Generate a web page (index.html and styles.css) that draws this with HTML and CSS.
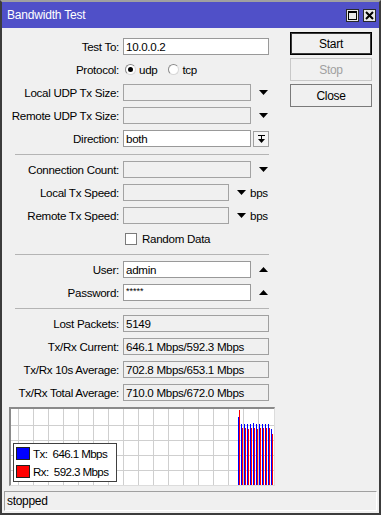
FILE: index.html
```html
<!DOCTYPE html>
<html>
<head>
<meta charset="utf-8">
<title>Bandwidth Test</title>
<link rel="stylesheet" href="styles.css">
</head>
<body>
<div class="window">
  <div class="titlebar">
    <span class="title">Bandwidth Test</span>
    <span class="tb-btn"><svg width="11" height="11" viewBox="0 0 11 11"><rect x="1.5" y="1.5" width="8" height="8" fill="none" stroke="#000" stroke-width="1"/><rect x="1" y="1" width="9" height="2" fill="#000"/></svg></span>
    <span class="tb-btn"><svg width="11" height="11" viewBox="0 0 11 11"><path d="M2 2L9 9M9 2L2 9" stroke="#000" stroke-width="2"/></svg></span>
  </div>
  <div class="main">
    <div class="form">
      <div class="row"><span class="label">Test To:</span><span class="field w-full white">10.0.0.2</span></div>
      <div class="row"><span class="label">Protocol:</span>
        <span class="radio on"></span><span class="opt">udp</span>
        <span class="radio"></span><span class="opt">tcp</span>
      </div>
      <div class="row"><span class="label">Local UDP Tx Size:</span><span class="field w-arrow"></span><span class="arrow"><svg width="9" height="5" viewBox="0 0 9 5"><path d="M0 0H9L4.5 5Z"/></svg></span></div>
      <div class="row"><span class="label">Remote UDP Tx Size:</span><span class="field w-arrow"></span><span class="arrow"><svg width="9" height="5" viewBox="0 0 9 5"><path d="M0 0H9L4.5 5Z"/></svg></span></div>
      <div class="row"><span class="label">Direction:</span><span class="field w-arrow white">both</span><span class="dir-btn"><svg width="9" height="10" viewBox="0 0 9 10"><path d="M1 1.5H8" stroke="#000" stroke-width="1"/><path d="M4.5 2V6" stroke="#000" stroke-width="1"/><path d="M1 5H8L4.5 9Z"/></svg></span></div>
      <div class="sep"></div>
      <div class="row"><span class="label">Connection Count:</span><span class="field w-arrow"></span><span class="arrow"><svg width="9" height="5" viewBox="0 0 9 5"><path d="M0 0H9L4.5 5Z"/></svg></span></div>
      <div class="row"><span class="label">Local Tx Speed:</span><span class="field w-unit"></span><span class="arrow"><svg width="9" height="5" viewBox="0 0 9 5"><path d="M0 0H9L4.5 5Z"/></svg></span><span class="unit">bps</span></div>
      <div class="row"><span class="label">Remote Tx Speed:</span><span class="field w-unit"></span><span class="arrow"><svg width="9" height="5" viewBox="0 0 9 5"><path d="M0 0H9L4.5 5Z"/></svg></span><span class="unit">bps</span></div>
      <div class="row"><span class="label"></span><span class="check"></span><span class="opt">Random Data</span></div>
      <div class="sep"></div>
      <div class="row"><span class="label">User:</span><span class="field w-arrow white">admin</span><span class="arrow"><svg width="9" height="5" viewBox="0 0 9 5"><path d="M0 5H9L4.5 0Z"/></svg></span></div>
      <div class="row"><span class="label">Password:</span><span class="field w-arrow white pw">*****</span><span class="arrow"><svg width="9" height="5" viewBox="0 0 9 5"><path d="M0 5H9L4.5 0Z"/></svg></span></div>
      <div class="sep"></div>
      <div class="row"><span class="label">Lost Packets:</span><span class="field w-full ro">5149</span></div>
      <div class="row"><span class="label">Tx/Rx Current:</span><span class="field w-full ro">646.1 Mbps/592.3 Mbps</span></div>
      <div class="row"><span class="label">Tx/Rx 10s Average:</span><span class="field w-full ro">702.8 Mbps/653.1 Mbps</span></div>
      <div class="row"><span class="label">Tx/Rx Total Average:</span><span class="field w-full ro">710.0 Mbps/672.0 Mbps</span></div>
    </div>
    <div class="actions">
      <button class="btn default">Start</button>
      <button class="btn" disabled>Stop</button>
      <button class="btn dark">Close</button>
    </div>
  </div>
  <div class="graph">
    <svg class="chart" width="263" height="76" viewBox="0 0 263 76">
      <rect width="263" height="76" fill="#fff"/>
      <g stroke="#cfcfcf" stroke-width="1">
        <path d="M7.5 0V76M22.5 0V76M37.5 0V76M52.5 0V76M67.5 0V76M82.5 0V76M97.5 0V76M112.5 0V76M127.5 0V76M142.5 0V76M157.5 0V76M172.5 0V76M187.5 0V76M202.5 0V76M217.5 0V76M232.5 0V76M247.5 0V76"/>
        <path d="M0 16.5H263M0 31.5H263M0 46.5H263M0 61.5H263"/>
      </g>
      <g fill="#0000ff">
        <rect x="227" y="8" width="1" height="68"/>
        <rect x="230" y="15" width="1" height="61"/>
        <rect x="233" y="15" width="1" height="61"/>
        <rect x="236" y="15" width="1" height="61"/>
        <rect x="239" y="15" width="1" height="61"/>
        <rect x="242" y="14" width="1" height="62"/>
        <rect x="245" y="15" width="1" height="61"/>
        <rect x="248" y="15" width="1" height="61"/>
        <rect x="251" y="15" width="1" height="61"/>
        <rect x="254" y="15" width="1" height="61"/>
        <rect x="257" y="15" width="1" height="61"/>
        <rect x="260" y="20" width="1" height="56"/>
      </g>
      <g fill="#ff0000">
        <rect x="228" y="1" width="1" height="75"/>
        <rect x="231" y="19" width="1" height="57"/>
        <rect x="234" y="19" width="1" height="57"/>
        <rect x="237" y="20" width="1" height="56"/>
        <rect x="240" y="19" width="1" height="57"/>
        <rect x="243" y="19" width="1" height="57"/>
        <rect x="246" y="20" width="1" height="56"/>
        <rect x="249" y="19" width="1" height="57"/>
        <rect x="252" y="19" width="1" height="57"/>
        <rect x="255" y="19" width="1" height="57"/>
        <rect x="258" y="19" width="1" height="57"/>
        <rect x="261" y="25" width="1" height="51"/>
      </g>
    </svg>
    <div class="legend">
      <div class="leg-row"><span class="swatch tx"></span><span class="leg-text">Tx:  646.1 Mbps</span></div>
      <div class="leg-row"><span class="swatch rx"></span><span class="leg-text">Rx:  592.3 Mbps</span></div>
    </div>
  </div>
  <div class="status">stopped</div>
</div>
</body>
</html>
```
FILE: styles.css
```css
html, body {
  margin: 0;
  padding: 0;
  background: #ffffff;
}

.window {
  width: 381px;
  height: 515px;
  box-sizing: border-box;
  border: 2px solid #3c3c3c;
  border-top-color: #a0a0a0;
  background: #f0f0f0;
  display: flex;
  flex-direction: column;
  font-family: "Liberation Sans", Arial, sans-serif;
  font-size: 11.6px;
  letter-spacing: -0.3px;
  color: #000;
}

.titlebar {
  height: 26px;
  flex: none;
  background: #5050c8;
  color: #fff;
  display: flex;
  align-items: center;
  padding: 0 3px 0 5px;
  font-size: 12px;
  letter-spacing: -0.2px;
}

.title {
  flex: 1;
}

.tb-btn {
  width: 13px;
  height: 13px;
  box-sizing: border-box;
  border: 1px solid #2a2a2a;
  background: #e8e8e8;
  display: flex;
  align-items: center;
  justify-content: center;
  margin-left: 4px;
}

.main {
  display: flex;
  height: 373px;
  flex: none;
}

.form {
  width: 280px;
  box-sizing: border-box;
  padding-top: 10px;
  display: flex;
  flex-direction: column;
  gap: 6px;
}

.row {
  display: flex;
  align-items: center;
  height: 17px;
}

.label {
  width: 117px;
  margin-right: 4px;
  text-align: right;
  white-space: nowrap;
  flex: none;
}

.field {
  height: 17px;
  box-sizing: border-box;
  border: 1px solid #a3a3a3;
  background: #f0f0f0;
  padding-left: 2px;
  display: flex;
  align-items: center;
  white-space: nowrap;
  flex: none;
}

.field.white {
  background: #ffffff;
  border-color: #999999;
}

.field.ro {
  border-color: #a0a0a0;
  background: #f0f0f0;
}

.field.pw {
  font-size: 9px;
  letter-spacing: 0;
  align-items: flex-start;
  padding-top: 1px;
}

.w-full { width: 146px; }
.w-arrow { width: 128px; }
.w-unit { width: 106px; }

.arrow {
  display: flex;
  margin-left: 8px;
}

.unit {
  margin-left: 4px;
}

.dir-btn {
  width: 16px;
  height: 16px;
  box-sizing: border-box;
  margin-left: 2px;
  border: 1px solid #a0a0a0;
  background: #f4f4f4;
  display: flex;
  align-items: center;
  justify-content: center;
}

.radio {
  width: 11px;
  height: 11px;
  box-sizing: border-box;
  border-radius: 50%;
  border: 1px solid #8a8a8a;
  border-right-color: #d8d8d8;
  border-bottom-color: #d8d8d8;
  background: #fff;
  margin-left: 2px;
  margin-right: 3px;
  position: relative;
  flex: none;
}

.radio.on::after {
  content: "";
  position: absolute;
  left: 2px;
  top: 2px;
  width: 5px;
  height: 5px;
  border-radius: 50%;
  background: #000;
}

.opt {
  margin-right: 9px;
}

.check {
  width: 12px;
  height: 12px;
  box-sizing: border-box;
  border: 1px solid #7a7a7a;
  background: #fff;
  margin-left: 2px;
  margin-right: 5px;
  flex: none;
}

.sep {
  height: 1px;
  margin-top: 1px;
  margin-left: 13px;
  width: 254px;
  background: #b4b4b4;
  flex: none;
}

.actions {
  margin-left: 8px;
  padding-top: 4px;
  display: flex;
  flex-direction: column;
  gap: 3px;
}

.btn {
  width: 82px;
  height: 23px;
  box-sizing: border-box;
  border: 1px solid #c4c4c4;
  background: #f0f0f0;
  font-family: "Liberation Sans", Arial, sans-serif;
  font-size: 12px;
  letter-spacing: -0.3px;
  color: #000;
  padding: 0;
  margin: 0;
}

.btn.default {
  border: 1px solid #000;
  box-shadow: inset 0 0 0 1px #3a3a3a;
}

.btn.dark {
  border-color: #7a7a7a;
}

.btn:disabled {
  color: #a0a0a0;
  border-color: #c8c8c8;
}

.graph {
  position: relative;
  margin: 6px 0 0 7px;
  width: 266px;
  height: 79px;
  box-sizing: border-box;
  border-top: 2px solid #8a8a8a;
  border-left: 2px solid #8a8a8a;
  border-right: 1px solid #dcdcdc;
  border-bottom: 1px solid #dcdcdc;
  flex: none;
}

.chart {
  display: block;
}

.legend {
  position: absolute;
  left: 2px;
  top: 34px;
  width: 104px;
  height: 39px;
  box-sizing: border-box;
  border: 1px solid #404040;
  background: #fff;
  padding: 3px 0 0 2px;
  display: flex;
  flex-direction: column;
  gap: 5px;
  font-size: 11.6px;
  letter-spacing: -0.6px;
}

.leg-row {
  display: flex;
  align-items: center;
  height: 13px;
}

.swatch {
  width: 14px;
  height: 13px;
  box-sizing: border-box;
  border: 1px solid #202020;
  margin-right: 3px;
  flex: none;
}

.swatch.tx { background: #0000ff; }
.swatch.rx { background: #ff0000; }

.leg-text {
  white-space: pre;
}

.status {
  margin: 5px 2px 1px 2px;
  height: 20px;
  box-sizing: border-box;
  border: 1px solid;
  border-color: #a0a0a0 #ffffff #ffffff #a0a0a0;
  padding-left: 2px;
  display: flex;
  align-items: center;
  font-size: 12px;
  flex: none;
}
```
